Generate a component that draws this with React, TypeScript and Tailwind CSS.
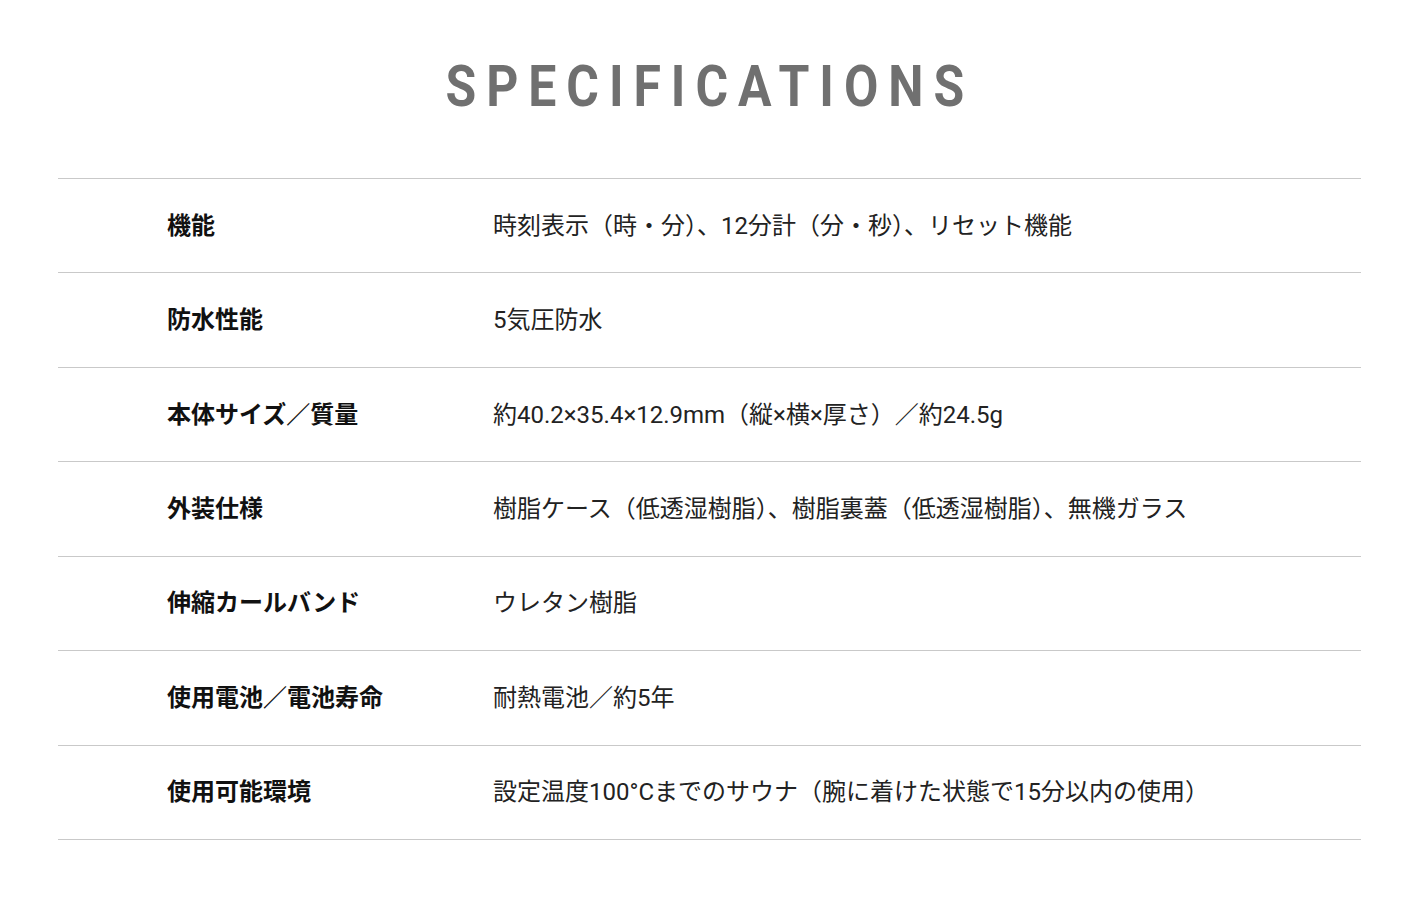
const rows: [string, string][] = [
  ['機能', '時刻表示（時・分）、12分計（分・秒）、リセット機能'],
  ['防水性能', '5気圧防水'],
  ['本体サイズ／質量', '約40.2×35.4×12.9mm（縦×横×厚さ）／約24.5g'],
  ['外装仕様', '樹脂ケース（低透湿樹脂）、樹脂裏蓋（低透湿樹脂）、無機ガラス'],
  ['伸縮カールバンド', 'ウレタン樹脂'],
  ['使用電池／電池寿命', '耐熱電池／約5年'],
  ['使用可能環境', '設定温度100°Cまでのサウナ（腕に着けた状態で15分以内の使用）'],
]

export default function App() {
  return (
    <div className="min-h-[920px] bg-white pt-[56px] font-['Noto_Sans_CJK_JP',sans-serif]">
      <div className="text-center">
        <h1 className="inline-block scale-x-[0.86] pr-[0.1em] font-['Roboto',sans-serif] text-[58px] font-bold leading-[60px] tracking-[0.2em] text-[#707070]">
          SPECIFICATIONS
        </h1>
      </div>
      <div className="ml-[58px] mt-[62px] w-[1303px] border-t border-[#c9c9c9]">
        {rows.map(([label, value]) => (
          <div key={label} className="flex h-[94.43px] items-center border-b border-[#c9c9c9] pb-[2px]">
            <div className="flex items-baseline text-[24px] leading-[34px]">
              <div className="w-[435px] pl-[109px] font-bold text-[#111]">{label}</div>
              <div className="font-['Roboto','Noto_Sans_CJK_JP',sans-serif] text-[#222]">{value}</div>
            </div>
          </div>
        ))}
      </div>
    </div>
  )
}
